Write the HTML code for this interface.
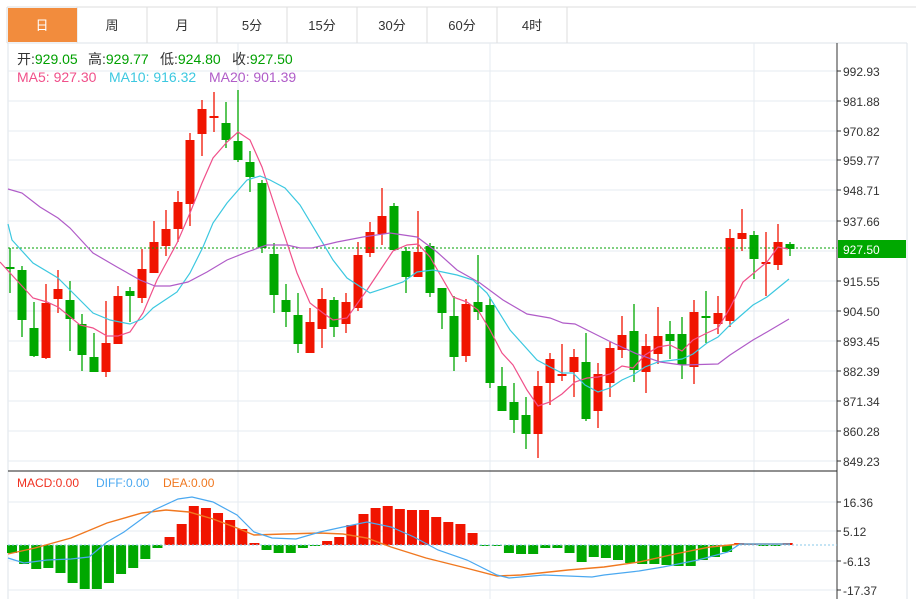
<!DOCTYPE html>
<html><head><meta charset="utf-8"><style>
body{margin:0;background:#fff;width:916px;height:599px;overflow:hidden;font-family:"Liberation Sans","Noto Sans CJK SC",sans-serif}
svg{position:absolute;left:0;top:0}
</style></head><body>
<svg id="s" width="916" height="599" xmlns="http://www.w3.org/2000/svg" font-family="Liberation Sans, Noto Sans CJK SC, sans-serif"></svg>
<script>
var s=document.getElementById('s'),h='';
function L(x1,y1,x2,y2,c,w,d){h+='<line x1="'+x1+'" y1="'+y1+'" x2="'+x2+'" y2="'+y2+'" stroke="'+c+'" stroke-width="'+(w||1)+'"'+(d?' stroke-dasharray="'+d+'"':'')+'/>';}
function R(x,y,w,hh,c){h+='<rect x="'+x+'" y="'+y+'" width="'+w+'" height="'+hh+'" fill="'+c+'"/>';}
function T(x,y,t,c,sz,a){h+='<text x="'+x+'" y="'+y+'" fill="'+c+'" font-size="'+(sz||12)+'"'+(a?' text-anchor="'+a+'"':'')+'>'+t+'</text>';}
function P(pts,c,w){h+='<polyline fill="none" stroke="'+c+'" stroke-width="'+(w||1.2)+'" points="'+pts+'"/>';}
L(7,7,916,7,'#ddd');L(7,43,907,43,'#dde3ea');L(907,43,907,599,'#dde3ea');L(8,43,8,599,'#dde3ea');
var tabs=['日','周','月','5分','15分','30分','60分','4时'];
for(var i=0;i<9;i++){L(7+70*i,7,7+70*i,43,'#ddd');}
R(8,8,69,34,'#f28c3d');
for(var i=0;i<8;i++)T(42+70*i,30,tabs[i],i==0?'#fff':'#333',13,'middle');
var gy=[71,101,131,160,190,221,281,311,341,371,401,431,461],gl=['992.93','981.88','970.82','959.77','948.71','937.66','915.55','904.50','893.45','882.39','871.34','860.28','849.23'];
gy.forEach(function(y,i){L(8,y,837,y,'#e6ebf0');L(837,y,841,y,'#333');T(843,y+5,gl[i],'#333',12);});
L(8,251,837,251,'#e6ebf0');
[238,490,754].forEach(function(x){L(x,43,x,599,'#e6ebf0');});
var my=[502,531,561,590],ml=['16.36','5.12','-6.13','-17.37'];
my.forEach(function(y,i){L(8,y,837,y,'#e6ebf0');L(837,y,841,y,'#333');T(843,y+5,ml[i],'#333',12);});
L(837,43,837,599,'#333');L(8,471,837,471,'#222');
var C=[[267,269,248,293,'g'],[270,320,266,337,'g'],[328,356,302,357,'g'],[303,358,284,359,'r'],[289,299,270,313,'r'],[300,319,281,351,'g'],[324,355,314,371,'g'],[357,372,333,372,'g'],[343,372,301,377,'r'],[296,344,286,344,'r'],[291,296,287,322,'g'],[269,298,249,303,'r'],[242,273,221,273,'r'],[229,246,210,256,'r'],[202,229,191,242,'r'],[140,204,133,226,'r'],[109,134,100,156,'r'],[116,118,92,132,'r'],[123,140,102,148,'g'],[141,160,90,162,'g'],[162,177,151,192,'g'],[183,248,180,253,'g'],[254,295,243,313,'g'],[300,312,284,327,'g'],[315,344,293,353,'g'],[322,353,308,353,'r'],[299,329,288,348,'r'],[300,327,297,337,'g'],[302,324,293,333,'r'],[255,308,242,311,'r'],[232,253,222,257,'r'],[216,234,188,245,'r'],[206,250,203,251,'g'],[251,277,247,293,'g'],[252,277,211,277,'r'],[246,293,243,297,'g'],[288,313,288,329,'g'],[316,357,296,371,'g'],[304,356,299,362,'r'],[302,312,255,320,'g'],[305,383,297,388,'g'],[386,411,367,411,'g'],[402,420,383,433,'g'],[415,434,397,449,'g'],[386,434,371,458,'r'],[359,383,353,405,'r'],[374,376,344,381,'r'],[357,372,349,397,'r'],[362,419,333,421,'g'],[374,411,363,428,'r'],[348,383,342,397,'r'],[335,350,316,358,'r'],[331,370,304,382,'g'],[346,372,334,393,'r'],[336,354,307,364,'r'],[334,341,321,359,'g'],[334,365,317,379,'g'],[312,367,300,384,'r'],[316,318,291,343,'g'],[313,324,296,334,'r'],[238,321,229,327,'r'],[233,239,209,251,'r'],[235,259,231,279,'g'],[262,264,232,296,'r'],[242,265,224,270,'r'],[244,249,242,256,'g']];
C.forEach(function(c,i){var x=10+12*i,col=c[4]=='r'?'#f01400':'#00a800';L(x,c[2],x,c[3],col,1.3);R(x-4.5,c[0],9,Math.max(2,c[1]-c[0]),col);});
L(8,248,837,248,'#00a000',1,'2,2');
P('0,262 33,298 47,302 58,307 80,325 93,328 107,336 118,336 130,332 143,313 157,280 177,243 190,213 202,183 213,158 227,142 238,132 250,140 262,167 280,222 297,273 310,303 323,313 333,320 347,318 367,290 393,251 407,245 418,244 430,257 453,297 467,302 478,310 490,330 502,353 513,365 527,390 538,406 550,402 562,394 575,382 587,378 598,377 610,374 622,366 633,368 645,355 658,347 670,345 682,351 693,340 707,333 718,328 730,308 743,282 755,272 767,262 778,247 788,249','#f0508a');
P('8,224 12,240 33,263 58,278 70,290 93,313 110,320 130,324 142,319 153,308 177,292 190,273 203,247 213,223 227,203 247,180 260,176 270,180 285,188 300,205 333,260 347,278 370,293 403,282 417,272 433,270 457,275 473,280 487,293 510,330 537,360 550,367 562,373 573,373 585,385 598,392 610,388 622,380 633,375 645,367 658,362 682,359 693,354 707,343 718,337 730,325 753,305 767,297 789,279','#3cc8e0');
P('8,189 22,193 40,207 58,218 70,228 93,253 117,267 140,280 155,286 170,286 188,282 207,272 227,260 247,252 267,245 287,245 300,248 312,248 337,242 363,237 390,233 417,237 437,252 457,270 480,283 503,300 527,314 550,318 563,323 575,324 597,335 613,343 637,354 660,362 682,365 718,364 730,355 753,340 767,332 789,319','#b05cc8');
R(838,240,68,18,'#00a800');T(843,254,'927.50','#fff',12);
var B=[553,564,569,568,573,583,589,589,583,574,568,559,548,537,524,506,508,513,520,529,543,550,553,553,548,546,541,537,525,514,508,506,509,510,510,517,522,524,533,546,546,553,554,554,548,548,553,562,557,558,560,563,564,564,565,566,566,560,557,552,543,544,546,545,543];
B.forEach(function(y,k){var x=12+12.12*k;var col=y<545?'#f01400':'#00a800';if(y<545)R(x-5,y,10,545-y,col);else R(x-5,545,10,Math.max(1,y-545),col);});
L(8,545,837,545,'#8ac8e8',1,'2,2');
P('8,554 35,548 71,538 107,523 142,513 166,510 189,512 213,519 237,528 254,535 284,534 320,533 343,534 367,538 391,547 426,558 462,567 497,576 521,575 568,570 604,567 639,562 675,554 710,547 740,544 790,544','#f07820',1.4);
P('8,558 24,563 47,560 71,559 89,557 107,542 124,532 154,510 178,499 192,497 213,502 237,515 254,532 272,538 296,539 320,532 343,527 367,522 391,527 414,537 438,550 467,560 497,575 509,578 544,575 592,577 604,575 639,571 663,567 698,560 728,552 740,544 790,544','#4aa8f0',1.2);
var hd=[[17,'开','929.05'],[88,'高','929.77'],[160,'低','924.80'],[232,'收','927.50']];
hd.forEach(function(a){h+='<text x="'+a[0]+'" y="64" font-size="14" fill="#333">'+a[1]+':<tspan fill="#00a000">'+a[2]+'</tspan></text>';});
T(17,82,'MA5: 927.30','#f0508a',14);T(109,82,'MA10: 916.32','#3cc8e0',14);T(209,82,'MA20: 901.39','#b05cc8',14);
T(17,487,'MACD:0.00','#f03020',12);T(96,487,'DIFF:0.00','#4aa8f0',12);T(163,487,'DEA:0.00','#f07820',12);
s.innerHTML=h;
</script>
</body></html>
